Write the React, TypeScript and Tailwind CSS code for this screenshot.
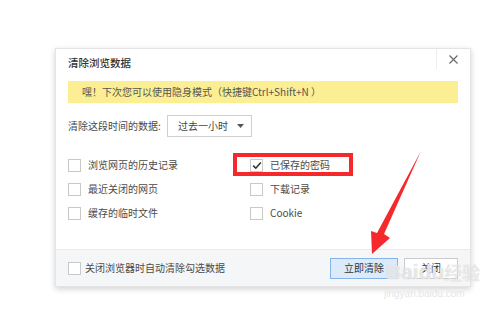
import React from "react";

const font = { fontFamily: '"Noto Sans CJK SC", "Noto Sans", sans-serif' };

function Box({ checked = false }: { checked?: boolean }) {
  return (
    <span className="w-[13px] h-[13px] border border-[#c9c9c9] bg-white flex items-center justify-center shrink-0">
      {checked && (
        <svg width="10" height="9" viewBox="0 0 10 9">
          <path d="M1.2 4.6 L3.8 7.2 L8.8 1.4" fill="none" stroke="#333" strokeWidth="1.6" />
        </svg>
      )}
    </span>
  );
}

function Item({ label, checked }: { label: string; checked?: boolean }) {
  return (
    <div className="flex items-center h-[24px] gap-[7px]">
      <Box checked={checked} />
      <span className="text-[10px] leading-[12px] text-[#4a4a4a]">{label}</span>
    </div>
  );
}

export default function App() {
  return (
    <div className="relative w-[500px] h-[311px] bg-white overflow-hidden pl-[55px] pt-[48px]" style={font}>
      <div className="relative w-[416px] h-[239px] flex flex-col bg-white border border-[#e4e4e4] shadow-[0_2px_6px_rgba(0,0,0,0.18)]">
        <div className="h-[32px] pl-[12px] pt-[7px] flex items-start">
          <span className="text-[10.5px] leading-[14px] text-[#333] font-medium">清除浏览数据</span>
        </div>
        <div className="absolute right-0 top-0 w-[34px] h-[20px] border-l border-[#eeeeee] flex items-center justify-center">
          <svg width="9" height="9" viewBox="0 0 9 9">
            <path d="M0.5 0.5 L8.5 8.5 M8.5 0.5 L0.5 8.5" stroke="#666" strokeWidth="1.1" />
          </svg>
        </div>
        <div className="mx-[12px] h-[22px] bg-[#fbee93] flex items-center pl-[14px]">
          <span className="text-[10px] leading-[12px] text-[#555]">嘿！下次您可以使用隐身模式（快捷键Ctrl+Shift+N ）</span>
        </div>
        <div className="mt-[12px] ml-[12px] h-[22px] flex items-center">
          <span className="w-[99px] text-[10px] leading-[12px] text-[#4a4a4a]">清除这段时间的数据:</span>
          <div className="w-[85px] h-[22px] border border-[#cfcfcf] bg-white flex items-center justify-between pl-[10px] pr-[7px]">
            <span className="text-[10px] leading-[12px] text-[#444]">过去一小时</span>
            <svg width="7" height="4" viewBox="0 0 7 4">
              <path d="M0 0 L7 0 L3.5 4 Z" fill="#555" />
            </svg>
          </div>
        </div>
        <div className="mt-[16px] ml-[12px] grid grid-cols-[182px_182px]">
          <Item label="浏览网页的历史记录" />
          <Item label="已保存的密码" checked />
          <Item label="最近关闭的网页" />
          <Item label="下载记录" />
          <Item label="缓存的临时文件" />
          <Item label="Cookie" />
        </div>
        <div className="mt-auto h-[37px] bg-[#f5f6f8] border-t border-[#ebebeb] flex items-center justify-between pl-[12px] pr-[12px]">
          <div className="flex items-center gap-[4px]">
            <Box />
            <span className="text-[10px] leading-[12px] text-[#4a4a4a]">关闭浏览器时自动清除勾选数据</span>
          </div>
          <div className="flex items-center gap-[6px]">
            <div className="w-[68px] h-[21px] border border-[#86b4e6] bg-[#dcebfc] flex items-center justify-center">
              <span className="text-[10px] leading-[12px] text-[#333]">立即清除</span>
            </div>
            <div className="w-[54px] h-[21px] border border-[#cccccc] bg-white flex items-center justify-center">
              <span className="text-[10px] leading-[12px] text-[#333]">关闭</span>
            </div>
          </div>
        </div>
      </div>

      {/* red annotation box */}
      <div className="absolute left-[233px] top-[153px] w-[120px] h-[23px] border-[4px] border-[#f5292b]" />

      {/* red arrow */}
      <svg className="absolute left-0 top-0" width="500" height="311" viewBox="0 0 500 311">
        <polygon points="421,151 384,234 390,238 372,254 371,231 377,233" fill="#f5292b" />
      </svg>

      {/* watermark */}
      <div className="absolute left-[386px] top-[260px] flex items-end">
        <span className="text-[21px] leading-[24px] font-bold text-white/60 [text-shadow:0_0_1px_#c0c0c0]" style={{ fontFamily: '"Liberation Sans", sans-serif' }}>
          Baidu
        </span>
        <span className="text-[18px] leading-[24px] text-white/60 [text-shadow:0_0_1px_#c0c0c0]">经验</span>
      </div>
      <div className="absolute left-[384px] top-[289px] text-[10px] leading-[10px] text-[#e6e6e6]" style={{ fontFamily: '"Liberation Sans", sans-serif' }}>
        jingyan.baidu.com
      </div>
    </div>
  );
}
